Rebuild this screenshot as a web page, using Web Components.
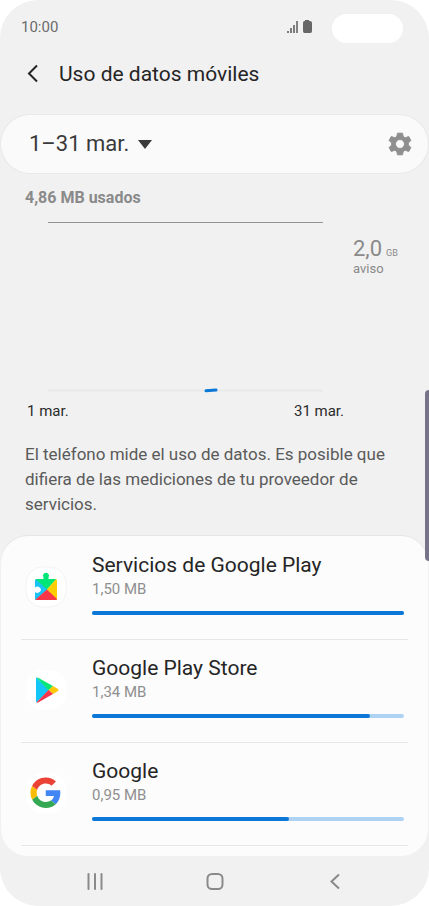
<!DOCTYPE html>
<html lang="es">
<head>
<meta charset="utf-8">
<meta name="viewport" content="width=device-width, initial-scale=1">
<title>Uso de datos móviles</title>
<style>
  body {
    margin: 0;
    background: #fff;
    color: #252525;
    font-family: Roboto, "Noto Sans", sans-serif;
  }
</style>
</head>
<body>
<phone-shell>
  <status-bar time="10:00"></status-bar>
  <page-header>Uso de datos móviles</page-header>
  <period-bar period="1–31 mar."></period-bar>
  <usage-chart total="4,86 MB usados" limit="2,0" unit="GB" note="aviso" from="1 mar." to="31 mar."></usage-chart>
  <usage-note>El teléfono mide el uso de datos. Es posible que difiera de las mediciones de tu proveedor de servicios.</usage-note>
  <app-list>
    <app-row name="Servicios de Google Play" amount="1,50 MB" share="100">
      <svg slot="icon" width="42" height="42" viewBox="0 0 42 42" aria-hidden="true">
        <rect x="1" y="1" width="40" height="40" rx="16" fill="#fff" stroke="#f3f3f3"/>
        <path d="M10 14.500q0-1.500 1.500-1.500H20L22.500 23.500 11 34q-1 0-1-1.500V26a3.500 3 0 1 0 0-4.500z" fill="#19c3f5"/>
        <path d="M10.500 13H18.500v-1.500a3 3 0 1 1 5 0V13h8L22 23.500z" fill="#00e676"/>
        <path d="M31 13q1 .5 1 1.500v18q0 1-.5 1.500L22 23.500z" fill="#ffce00"/>
        <path d="M22 23.500 32 33q0 1-1.500 1H11.500l-1-.5z" fill="#f83648"/>
      </svg>
    </app-row>
    <app-row name="Google Play Store" amount="1,34 MB" share="89">
      <svg slot="icon" width="42" height="42" viewBox="0 0 42 42" aria-hidden="true">
        <rect x="1" y="1" width="40" height="40" rx="16" fill="#fff"/>
        <path d="M11.500 8.500q-.5.300-.5 1.500v22q0 1.200.5 1.600L24 21z" fill="#14c6f8"/>
        <path d="M11.500 8.500q.6-.3 1.600.2L28 17l-4.500 4.500z" fill="#05e676"/>
        <path d="M28 17l5 2.900q1.300 1.100 0 2.200L28 25l-4.500-4z" fill="#ffc90a"/>
        <path d="M11.500 33.600q.6.300 1.600-.2L28 25l-4.500-4z" fill="#f6344b"/>
      </svg>
    </app-row>
    <app-row name="Google" amount="0,95 MB" share="63">
      <svg slot="icon" width="42" height="42" viewBox="0 0 42 42" aria-hidden="true">
        <rect x="1" y="1" width="40" height="40" rx="16" fill="#fff"/>
        <g transform="translate(5.500 5.500) scale(.635)">
          <path fill="#4285f4" d="M46.980 24.550c0-1.570-.15-3.090-.38-4.550H24v9.020h12.940c-.58 2.960-2.260 5.480-4.780 7.180l7.730 6c4.510-4.180 7.090-10.360 7.090-17.650z"/>
          <path fill="#34a853" d="M24 48c6.480 0 11.930-2.130 15.890-5.810l-7.730-6c-2.150 1.450-4.920 2.300-8.160 2.300-6.260 0-11.570-4.220-13.470-9.910l-7.980 6.190C6.510 42.620 14.620 48 24 48z"/>
          <path fill="#fbbc05" d="M10.530 28.590c-.48-1.450-.76-2.990-.76-4.590s.27-3.140.76-4.590l-7.980-6.190C.92 16.460 0 20.120 0 24s.92 7.540 2.560 10.780z"/>
          <path fill="#ea4335" d="M24 9.500c3.540 0 6.710 1.220 9.210 3.600l6.850-6.850C35.900 2.380 30.470 0 24 0 14.620 0 6.510 5.380 2.560 13.220l7.980 6.190C12.430 13.720 17.740 9.500 24 9.500z"/>
        </g>
      </svg>
    </app-row>
  </app-list>
  <nav-bar></nav-bar>
  <edge-handle></edge-handle>
</phone-shell>

<script>
  class BaseElement extends HTMLElement {
    connectedCallback() {
      if (this.shadowRoot) return;
      this.attachShadow({ mode: "open" }).innerHTML =
        "<style>*{box-sizing:border-box}button{border:0;padding:0;background:none;font:inherit;color:inherit;display:grid;place-items:center}</style>" + this.render();
    }
    attr(name) {
      return this.getAttribute(name) || "";
    }
  }

  customElements.define("phone-shell", class extends BaseElement {
    render() {
      return `<style>
        :host { display: flex; flex-direction: column; position: relative; min-height: 100vh;
          background: #f1f1f1; border-radius: 38px; overflow: hidden; }
      </style><slot></slot>`;
    }
  });

  customElements.define("status-bar", class extends BaseElement {
    render() {
      return `<style>
        :host { display: flex; align-items: center; height: 44px; margin-top: 6px; padding: 0 26px 0 21px; color: #6b6b6b; }
        time { flex: 1; font-size: 15px; line-height: 20px; margin-bottom: 2px; }
        svg { margin: 0 20px 2px 0; }
        .camera { width: 71px; height: 29px; border-radius: 16px; background: #fff; }
      </style>
      <time>${this.attr("time")}</time>
      <svg width="26" height="14" viewBox="0 0 26 14" fill="#666" aria-label="Cobertura y batería" role="img">
        <path d="M1 11h2v2H1zM4 8h2v5H4zM7 5h2v8H7z" opacity=".85"/><path d="M10 1h2v12h-2z" opacity=".8"/>
        <path d="M19 0h4v1h1q2 0 2 2v8q0 2-1.500 2h-6Q17 13 17 11V3q0-2 1.500-2H19z"/>
      </svg>
      <span class="camera"></span>`;
    }
  });

  customElements.define("page-header", class extends BaseElement {
    render() {
      return `<style>
        :host { display: flex; align-items: center; gap: 15px; height: 48px; margin-bottom: 17px; padding: 0 22px; }
        h1 { margin: 0; font-size: 21px; line-height: 28px; font-weight: 400; }
        button { width: 22px; height: 32px; }
      </style>
      <button aria-label="Atrás"><svg width="22" height="22" viewBox="0 0 22 22" fill="none" stroke="#252525" stroke-width="2"><path d="M15 2.500 7 10.500l8 8"/></svg></button>
      <h1><slot></slot></h1>`;
    }
  });

  customElements.define("period-bar", class extends BaseElement {
    render() {
      return `<style>
        :host { display: flex; align-items: center; justify-content: space-between; height: 58px; margin: 0 1px;
          padding: 0 16px 0 28px; background: #fafafa; border-radius: 29px; box-shadow: 0 0 0 1px #e9e9e9; color: #3a3a3a; }
        label { display: flex; align-items: center; gap: 8px; }
        select { appearance: none; border: 0; padding: 0; margin: 0; background: none; color: inherit;
          font: 22px/30px Roboto, "Noto Sans", sans-serif; }
      </style>
      <label>
        <select aria-label="Periodo"><option>${this.attr("period")}</option></select>
        <svg width="14" height="9" viewBox="0 0 14 9" aria-hidden="true"><path d="M0 0h14L7 9z" fill="#3a3a3a"/></svg>
      </label>
      <button aria-label="Ajustes"><svg width="24" height="24" viewBox="0 0 24 24" fill="#8f8f8f">
        <path fill-rule="evenodd" d="M9.500 1.200h5l.7 3.400 2 1.200 3.500-1.300 2.200 4-2.600 2.400v2.200l2.600 2.400-2.200 4-3.500-1.300-2 1.200-.7 3.400h-5l-.7-3.400-2-1.200-3.500 1.300-2.200-4 2.600-2.400v-2.200L1.100 8.500l2.200-4 3.500 1.300 2-1.200zM12 7.500a4.500 4.500 0 1 0 0 9 4.500 4.500 0 0 0 0-9z" stroke="#8f8f8f" stroke-linejoin="round"/></svg></button>`;
    }
  });

  customElements.define("usage-chart", class extends BaseElement {
    render() {
      return `<style>
        :host { display: block; padding-top: 15px; color: #8a8a8a; }
        h2 { margin: 0 0 13px 25px; font-size: 16px; line-height: 20px; font-weight: 700; }
        .chart { display: grid; grid-template-columns: 1fr 76px; column-gap: 30px; padding-left: 48px; }
        svg { display: block; width: 100%; height: 172px; }
        .limit { padding-top: 15px; }
        .limit div { display: flex; align-items: baseline; gap: 4px; font-size: 22px; line-height: 26px; }
        .limit small { font-size: 9px; line-height: 12px; }
        .limit p { margin: 0; font-size: 13px; line-height: 14px; }
        .dates { display: flex; justify-content: space-between; padding: 8px 85px 0 27px;
          font-size: 15px; line-height: 20px; color: #2b2b2b; }
      </style>
      <h2>${this.attr("total")}</h2>
      <div class="chart">
        <svg viewBox="0 0 275 172" preserveAspectRatio="none" role="img" aria-label="Gráfico de uso">
          <path d="M0 1.500h275" stroke="#929292"/>
          <path d="M0 169.500h275" stroke="#e9e9e9" stroke-width="2"/>
          <path d="M158 169.800 168 169" stroke="#0b78d8" stroke-width="3" stroke-linecap="round"/>
        </svg>
        <div class="limit">
          <div><span>${this.attr("limit")}</span><small>${this.attr("unit")}</small></div>
          <p>${this.attr("note")}</p>
        </div>
      </div>
      <div class="dates"><span>${this.attr("from")}</span><span>${this.attr("to")}</span></div>`;
    }
  });

  customElements.define("usage-note", class extends BaseElement {
    render() {
      return `<style>
        :host { display: block; padding: 21px 25px 19px; }
        p { margin: 0; font-size: 17px; line-height: 25px; color: #5a5a5a; }
      </style><p><slot></slot></p>`;
    }
  });

  customElements.define("app-list", class extends BaseElement {
    render() {
      return `<style>
        :host { display: block; margin: 0 1px; padding: 1px 0 10px; background: #fcfcfc;
          border-radius: 27px; box-shadow: 0 -1px 0 0 #e6e6e6; }
      </style><slot></slot>`;
    }
  });

  customElements.define("app-row", class extends BaseElement {
    render() {
      return `<style>
        :host { display: block; }
        a { display: grid; grid-template-columns: 42px 1fr; column-gap: 25px; align-items: center;
          height: 103px; margin: 0 20px; padding: 0 4px 2px; border-bottom: 1px solid #e6e6e6; color: inherit; text-decoration: none; }
        h3 { margin: 0; font-size: 21px; line-height: 28px; font-weight: 400; }
        p { margin: 0; font-size: 15px; line-height: 20px; color: #8f8f8f; }
        progress { display: block; appearance: none; width: 100%; height: 4px; margin-top: 12px; border: 0; }
        progress::-webkit-progress-bar { background: #aed2f2; border-radius: 2px; }
        progress::-webkit-progress-value { background: #0b78d8; border-radius: 2px; }
        .info { padding-bottom: 8px; }
      </style>
      <a href="#">
        <slot name="icon"></slot>
        <div class="info">
          <h3>${this.attr("name")}</h3>
          <p>${this.attr("amount")}</p>
          <progress max="100" value="${this.attr("share")}" aria-label="${this.attr("name")}"></progress>
        </div>
      </a>`;
    }
  });

  customElements.define("nav-bar", class extends BaseElement {
    render() {
      return `<style>
        :host { display: flex; justify-content: space-between; align-items: center; flex: 1; min-height: 50px; padding: 0 83px; }
        svg { display: block; fill: none; stroke: #8a8a8a; stroke-width: 2; }
      </style>
      <button aria-label="Recientes"><svg width="24" height="20" viewBox="0 0 24 20"><path d="M5.500 3v15M12 3v15M18.500 3v15" stroke-linecap="round"/></svg></button>
      <button aria-label="Inicio"><svg width="20" height="20" viewBox="0 0 20 20"><rect x="2.500" y="3" width="15" height="15" rx="4.500"/></svg></button>
      <button aria-label="Volver"><svg width="24" height="20" viewBox="0 0 24 20"><path d="M17 3.500 9.500 10.500l7.500 7"/></svg></button>`;
    }
  });

  customElements.define("edge-handle", class extends BaseElement {
    render() {
      return `<style>
        :host { position: absolute; top: 43%; right: 0; width: 4px; height: 171px;
          border-radius: 4px 0 0 4px; background: #77748a; }
      </style>`;
    }
  });
</script>
</body>
</html>
